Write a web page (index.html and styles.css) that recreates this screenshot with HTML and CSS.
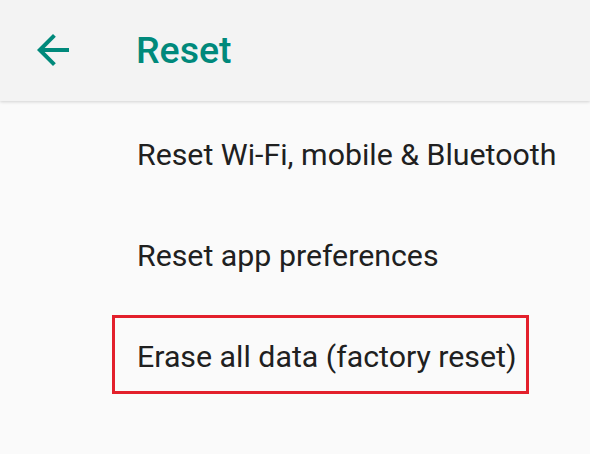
FILE: index.html
```html
<!DOCTYPE html>
<html>
<head>
<meta charset="utf-8">
<link rel="stylesheet" href="styles.css">
</head>
<body>
<header class="toolbar">
  <svg class="back" viewBox="0 0 24 24" width="48" height="48"><path d="M20 11H7.83l5.59-5.59L12 4l-8 8 8 8 1.41-1.41L7.83 13H20v-2z" fill="#00897b"/></svg>
  <h1 class="title">Reset</h1>
</header>
<main class="list">
  <div class="item">Reset Wi-Fi, mobile &amp; Bluetooth</div>
  <div class="item">Reset app preferences</div>
  <div class="item highlighted"><span class="mark">Erase all data (factory reset)</span></div>
</main>
</body>
</html>
```
FILE: styles.css
```css
html, body {
  margin: 0;
  padding: 0;
  background: #fafafa;
  font-family: Roboto, "Noto Sans", sans-serif;
  overflow: hidden;
}
.toolbar {
  height: 101px;
  background: #f3f3f3;
  display: flex;
  align-items: center;
  padding-left: 29px;
  box-shadow: 0 1px 3px rgba(0,0,0,0.16);
  position: relative;
}
.back {
  display: block;
  margin-top: -2px;
}
.title {
  margin: 0 0 0 59px;
  font-size: 37.5px;
  font-weight: 500;
  color: #00897b;
  line-height: 1;
  padding-top: 1px;
}
.list {
  padding-top: 34px;
}
.item {
  height: 101px;
  padding-left: 137px;
  font-size: 30.3px;
  color: #202020;
  line-height: 40px;
}
.highlighted {
  padding-left: 112px;
}
.mark {
  display: inline-block;
  border: 3px solid #e3202b;
  padding: 19px 9px 14px 22px;
  margin-top: -26px;
}
```
